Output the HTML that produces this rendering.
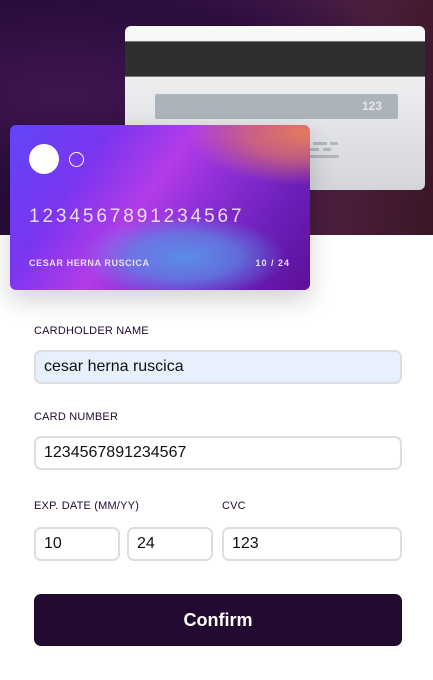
<!DOCTYPE html>
<html><head><style>
*{box-sizing:border-box;margin:0;padding:0}
body{width:433px;height:680px;background:#fff;font-family:"Liberation Sans",sans-serif;position:relative;overflow:hidden}
.hdr{position:absolute;left:0;top:0;width:433px;height:235px;background:radial-gradient(ellipse at 15% 40%,#3e1650 0%,#2a0d3c 45%,transparent 70%),linear-gradient(100deg,#220b33 0%,#3d1650 45%,#4a1e3a 80%,#3a1626 100%)}
.back{position:absolute;left:125px;top:26px;width:300px;height:164px;border-radius:6px;background:linear-gradient(180deg,#fafafb,#d4d5da);overflow:hidden}
.stripe{position:absolute;left:0;top:15px;width:100%;height:36px;background:#2f2f2f;border-top:1px solid #777;border-bottom:1px solid #777}
.sig{position:absolute;left:30px;top:68px;width:243px;height:25px;background:#adb3bb;border-radius:2px;color:#e6e8eb;font-size:12px;text-align:right;padding:5px 16px 0 0;font-weight:bold}
.ln{position:absolute;height:3px;background:#b0b5bd;border-radius:1px}
.front{position:absolute;left:10px;top:125px;width:300px;height:165px;border-radius:6px;overflow:hidden;
background:radial-gradient(ellipse 55% 45% at 98% 5%,#e67a5e 0%,rgba(230,120,95,.65) 35%,transparent 70%),
radial-gradient(ellipse 40% 30% at 58% 80%,#5b8ce8 0%,rgba(90,140,230,.7) 45%,transparent 85%),
linear-gradient(125deg,#6146f8 0%,#7a35ef 25%,#b23ce8 45%,#8d2fd6 60%,#6a1fb8 80%,#5d0f99 100%);box-shadow:0 10px 25px rgba(0,0,0,.18)}
.c1{position:absolute;left:19px;top:19px;width:30px;height:30px;border-radius:50%;background:#fff}
.c2{position:absolute;left:59px;top:27px;width:15px;height:15px;border-radius:50%;border:1.3px solid #fff}
.num{position:absolute;left:19px;top:81px;color:#e4ddf0;font-size:19px;letter-spacing:2.9px}
.nm{position:absolute;left:19px;top:133px;color:#e6e0f0;font-size:9px;font-weight:bold;letter-spacing:.6px}
.ex{position:absolute;right:20px;top:133px;color:#e6e0f0;font-size:9px;font-weight:bold;letter-spacing:1px}
.lbl{position:absolute;left:34px;font-size:11px;color:#21092f;letter-spacing:.2px}
.inp{position:absolute;height:34px;border:2px solid #dedede;border-radius:7px;font-size:16px;color:#111;padding:6px 0 0 8px}
.btn{position:absolute;left:34px;top:594px;width:368px;height:52px;background:#220a31;border-radius:7px;color:#fff;font-weight:bold;font-size:18px;text-align:center;line-height:52px}
</style></head><body>
<div class="hdr"></div>
<div class="back"><div class="stripe"></div><div class="sig">123</div>
<div class="ln" style="left:188px;top:116px;width:14px"></div><div class="ln" style="left:205px;top:116px;width:8px"></div>
<div class="ln" style="left:182px;top:122px;width:12px"></div><div class="ln" style="left:198px;top:122px;width:8px"></div>
<div class="ln" style="left:180px;top:129px;width:34px"></div></div>
<div class="front"><div class="c1"></div><div class="c2"></div>
<div class="num">1234567891234567</div><div class="nm">CESAR HERNA RUSCICA</div><div class="ex">10 / 24</div></div>
<div class="lbl" style="top:325px">CARDHOLDER NAME</div>
<div class="inp" style="left:34px;top:350px;width:368px;background:#e8f0fe">cesar herna ruscica</div>
<div class="lbl" style="top:411px">CARD NUMBER</div>
<div class="inp" style="left:34px;top:436px;width:368px">1234567891234567</div>
<div class="lbl" style="top:500px">EXP. DATE (MM/YY)</div>
<div class="lbl" style="top:500px;left:222px">CVC</div>
<div class="inp" style="left:34px;top:527px;width:86px">10</div>
<div class="inp" style="left:127px;top:527px;width:86px">24</div>
<div class="inp" style="left:222px;top:527px;width:180px">123</div>
<div class="btn">Confirm</div>
</body></html>
